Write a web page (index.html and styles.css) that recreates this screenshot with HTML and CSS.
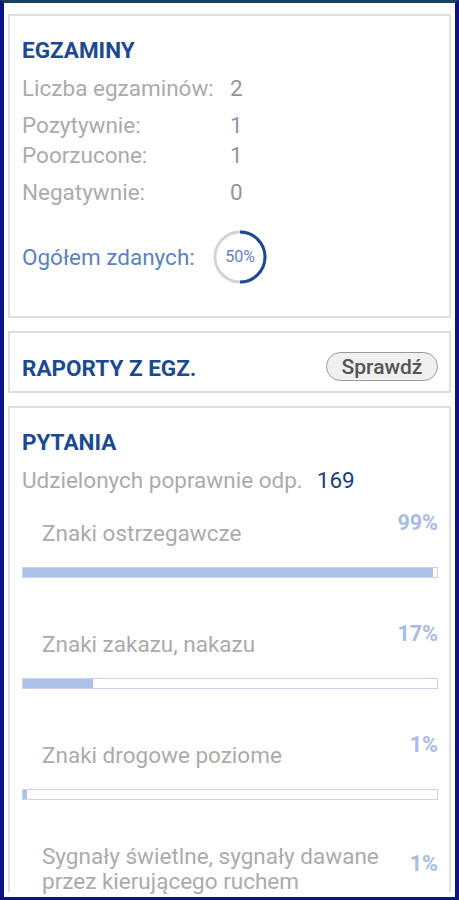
FILE: index.html
```html
<!DOCTYPE html>
<html lang="pl">
<head>
  <meta charset="UTF-8">
  <meta name="viewport" content="width=device-width, initial-scale=1.0">
  <title>Statystyki</title>
  <link rel="stylesheet" href="styles.css">
</head>
<body>
  <div class="frame">
    <div class="card exams">
      <h2 class="title">EGZAMINY</h2>
      <div class="row r1"><span class="label">Liczba egzaminów:</span><span class="val">2</span></div>
      <div class="row r2"><span class="label">Pozytywnie:</span><span class="val">1</span></div>
      <div class="row r3"><span class="label">Poorzucone:</span><span class="val">1</span></div>
      <div class="row r4"><span class="label">Negatywnie:</span><span class="val">0</span></div>
      <div class="total">
        <span class="total-label">Ogółem zdanych:</span>
        <div class="ring">
          <svg width="54" height="54" viewBox="0 0 54 54">
            <circle cx="27" cy="27" r="25" fill="none" stroke="#d4d4d4" stroke-width="3"/>
            <path d="M27 2 A25 25 0 0 1 27 52" fill="none" stroke="#1b4a92" stroke-width="3"/>
          </svg>
          <span class="ring-text">50%</span>
        </div>
      </div>
    </div>

    <div class="card reports">
      <h2 class="title">RAPORTY Z EGZ.</h2>
      <button class="btn">Sprawdź</button>
    </div>

    <div class="card questions">
      <h2 class="title">PYTANIA</h2>
      <div class="answered"><span class="label">Udzielonych poprawnie odp.</span><span class="count">169</span></div>

      <div class="cat">
        <div class="cat-head"><span class="cat-name">Znaki ostrzegawcze</span><span class="pct">99%</span></div>
        <div class="bar"><div class="fill" style="width: 99%"></div></div>
      </div>
      <div class="cat">
        <div class="cat-head"><span class="cat-name">Znaki zakazu, nakazu</span><span class="pct">17%</span></div>
        <div class="bar"><div class="fill" style="width: 17%"></div></div>
      </div>
      <div class="cat">
        <div class="cat-head"><span class="cat-name">Znaki drogowe poziome</span><span class="pct">1%</span></div>
        <div class="bar"><div class="fill" style="width: 1%"></div></div>
      </div>
      <div class="cat">
        <div class="cat-head two"><span class="cat-name">Sygnały świetlne, sygnały dawane przez kierującego ruchem</span><span class="pct">1%</span></div>
        <div class="bar"><div class="fill" style="width: 1%"></div></div>
      </div>
    </div>
  </div>
</body>
</html>
```

FILE: styles.css
```css
html, body { margin: 0; padding: 0; }
body { font-family: Roboto, "Liberation Sans", Arial, sans-serif; background: #fff; }

.frame { box-sizing: border-box; width: 459px; height: 900px; overflow: hidden; border: 4px solid #0c1485; border-top: 3px solid #17415c; border-bottom: 3px solid #0c1485; padding: 11px 4px 0; background: #fff; }

.card { border: 2px solid #dedede; background: #fff; margin-bottom: 13px; box-sizing: border-box; }
.title { margin: 0; font-size: 22.5px; font-weight: 700; color: #1b4a92; line-height: 26px; }

.exams { height: 304px; padding: 21px 12px 0; }
.row { display: flex; font-size: 22.5px; color: #ababab; line-height: 26px; }
.row .label { width: 208px; }
.row .val { color: #959595; }
.r1 { margin-top: 12px; }
.r2 { margin-top: 11px; }
.r3 { margin-top: 4px; }
.r4 { margin-top: 11px; }

.total { display: flex; align-items: center; margin-top: 25px; }
.total-label { font-size: 22.5px; color: #5b83c0; width: 191px; line-height: 26px; }
.ring { position: relative; width: 54px; height: 54px; }
.ring svg { display: block; }
.ring-text { position: absolute; left: 0; top: 0; width: 54px; line-height: 54px; text-align: center; font-size: 16px; color: #5b83c0; }

.reports { height: 62px; display: flex; align-items: center; justify-content: space-between; padding: 9px 11px 0 12px; }
.reports .title { margin-top: 3px; }
.btn { font-family: inherit; font-size: 21px; font-weight: 500; color: #555; background: #f0f0f0; border: 1.5px solid #9a9a9a; border-radius: 15px; height: 29px; width: 112px; padding: 0; line-height: 26px; }

.questions { padding: 21px 11px 0 12px; height: 486px; border-bottom: none; margin-bottom: 0; }
.answered { margin-top: 12px; font-size: 22.5px; color: #ababab; line-height: 26px; }
.answered .count { color: #1f3f78; margin-left: 14px; }

.cat { margin-top: 18px; }
.cat + .cat { margin-top: 44px; }
.cat-head { display: flex; justify-content: space-between; align-items: flex-start; }
.cat-name { font-size: 22.5px; color: #ababab; padding-left: 20px; margin-top: 9px; line-height: 26px; }
.pct { font-size: 21.5px; font-weight: 700; color: #a7bce3; line-height: 24px; }
.two .cat-name { width: 350px; margin-top: 0; line-height: 25px; }
.two .pct { margin-top: 8px; }

.bar { margin-top: 21px; height: 9px; border: 1px solid #c6d4ee; background: #fff; }
.fill { height: 100%; background: #adc2e8; }
```
